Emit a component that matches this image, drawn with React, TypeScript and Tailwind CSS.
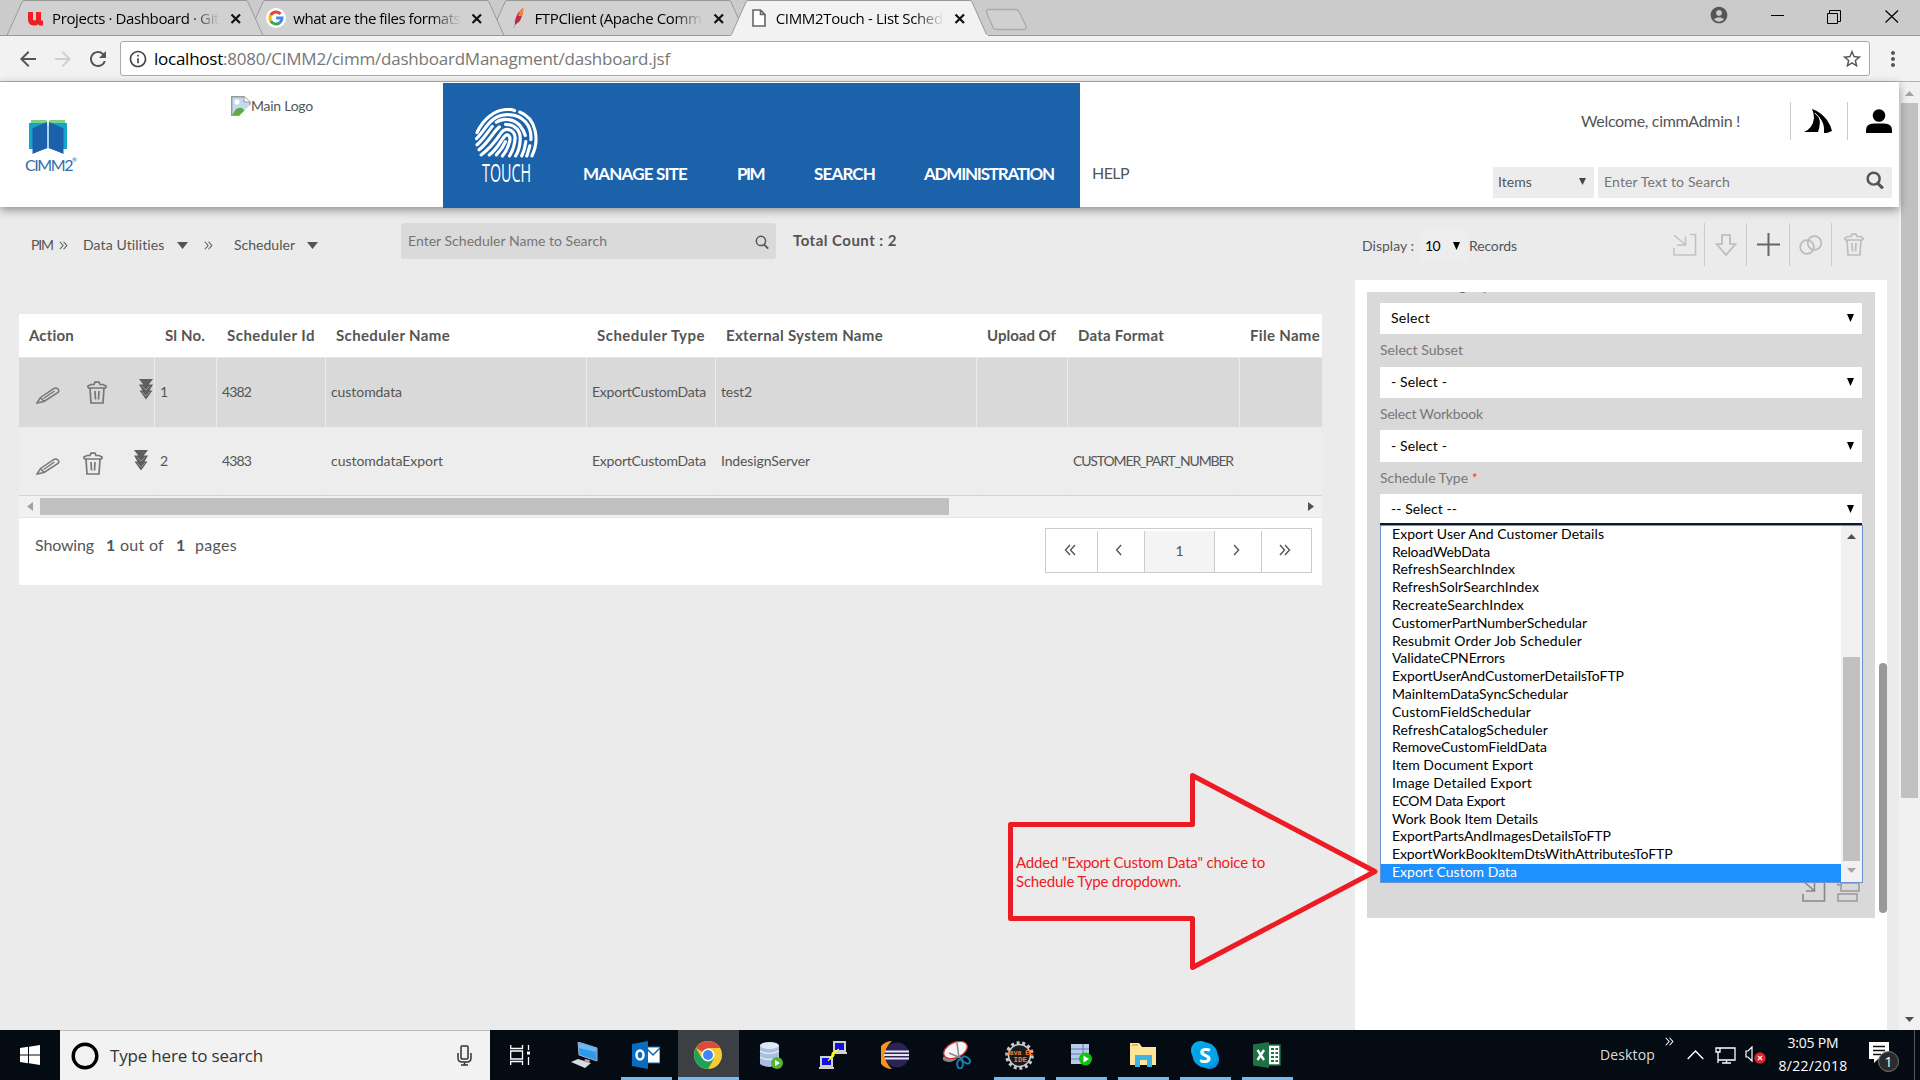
import React, { useLayoutEffect, useRef } from "react";
import { clsx } from "clsx";
import { MdArrowBack, MdArrowForward, MdRefresh, MdInfoOutline, MdStarBorder, MdAccountCircle, MdMoreVert } from "react-icons/md";

/* Single line of text whose tracking is adjusted to fill a known width. */
function T({ w, children, className }: { w: number; children: string; className?: string }) {
  const ref = useRef<HTMLSpanElement>(null);
  useLayoutEffect(() => {
    const el = ref.current;
    if (!el) return;
    el.style.letterSpacing = "0px";
    const natural = el.getBoundingClientRect().width;
    el.style.letterSpacing = `${(w - natural) / children.length}px`;
  }, [w, children]);
  return (
    <span className={clsx("block shrink-0 whitespace-pre", className)} style={{ width: w }}>
      <span ref={ref} className="inline-block">{children}</span>
    </span>
  );
}

const ui = "font-['Open_Sans',sans-serif]";

function Tab({ title, icon, active, z }: { title: string; icon: React.ReactNode; active?: boolean; z: string }) {
  return (
    <div className={clsx("relative flex h-9 w-[257px] shrink-0 items-center -mr-[15.75px] pl-[20px]", z)}>
      <svg className="absolute inset-0" width="257" height="36" viewBox="0 0 257 36">
        <path d="M0 35.5 L15 2 Q15.500 .5 17 .5 H239 Q240.500 .5 241 2 L256 35.500" fill={active ? "#f2f2f2" : "#d1d1d1"} stroke="#999" />
        {active ? <path d="M0 35.500H257" stroke="#f2f2f2" strokeWidth="1.500" /> : <path d="M0 35.500H257" stroke="#999" />}
      </svg>
      <div className="relative flex h-9 w-full items-center">
        <div className="flex w-[26px] items-center">{icon}</div>
        <div className="-ml-px w-[168px] overflow-hidden [mask-image:linear-gradient(to_right,black_82%,transparent_100%)]">
          <T w={167} className={clsx(ui, "text-[15px] leading-5 text-black")}>{title}</T>
        </div>
        <svg className="ml-[10px] mt-0.5" width="12" height="12" viewBox="0 0 12 12"><path d="M1.500 1.500L10 10M10 1.500L1.500 10" stroke="#111" strokeWidth="2.200" /></svg>
      </div>
    </div>
  );
}

const GoogleG = () => (
  <svg className="-ml-[2px]" width="20" height="20" viewBox="0 0 20 20"><circle cx="10" cy="10" r="10" fill="#fff" />
    <g fill="none" strokeWidth="3"><path d="M14.600 6A6 6 0 0 0 4.700 7.200" stroke="#ea4335" /><path d="M4.700 7.200A6 6 0 0 0 4.800 13" stroke="#fbbc05" /><path d="M4.800 13A6 6 0 0 0 13.700 14.700" stroke="#34a853" /><path d="M13.700 14.700A6 6 0 0 0 16 10H10.200" stroke="#4285f4" /></g>
  </svg>
);

const Down = ({ s = 8, h = 8, c = "#000" }: { s?: number; h?: number; c?: string }) => (
  <svg className="shrink-0" width={s} height={h} viewBox="0 0 8 8" preserveAspectRatio="none"><path d="M0 0H8L4 8Z" fill={c} /></svg>
);

const Search = ({ s, c = "#555", sw = 2.2 }: { s: number; c?: string; sw?: number }) => (
  <svg className="shrink-0" width={s} height={s} viewBox="0 0 16 16" fill="none" stroke={c} strokeWidth={sw}><circle cx="6.800" cy="6.800" r="5.300" /><path d="M10 10.500L15 15.500" strokeWidth={sw + 0.5} /></svg>
);

const Chevs = ({ n, left, h = 12, c = "#555" }: { n: number; left?: boolean; h?: number; c?: string }) => (
  <svg width={n === 2 ? h : h * 0.6} height={h} viewBox={n === 2 ? "0 0 12 12" : "0 0 7 12"} fill="none" stroke={c} strokeWidth="1.400" className={clsx("shrink-0", left && "rotate-180")}>
    <path d="M1 1L5.500 6L1 11" />{n === 2 && <path d="M6 1L10.500 6L6 11" />}
  </svg>
);

const Trash = ({ c }: { c: string }) => (
  <svg className="shrink-0" width="20" height="23" viewBox="0 0 20 23" fill="none" stroke={c} strokeWidth="1.700">
    <path d="M1 7V5L4 3.500H7L8 1.200H12L13 3.500H16L19 5V7M1 7H19M3 7L4 22H16L17 7M8 10L8.500 18.500M12 10L11.500 18.500" />
  </svg>
);
const Pencil = () => (
  <svg className="shrink-0" width="24" height="17" viewBox="0 0 24 17" fill="none" stroke="#777" strokeWidth="1.500">
    <path d="M1 16L4.500 10.500L18 1.500Q20 .5 22 2Q23.500 4 22 5.500L8 14.500ZM4.500 10.500L8 14.500M7.500 11.500L18.500 4" />
  </svg>
);
const Triple = () => (
  <svg className="shrink-0" width="14" height="21" viewBox="0 0 14 21" fill="#5f5f5f">
    <path d="M0 0H14L9.800 5.500H14L10.500 11.500H13.500L7 20.500L.5 11.500H3.500L0 5.500H4.200Z" />
    <path d="M3 7L7 11L11 7M3 13L7 17L11 13" fill="none" stroke="#aaa" strokeWidth=".7" />
  </svg>
);
const Enter = ({ c }: { c: string }) => (
  <svg className="shrink-0" width="24" height="23" viewBox="0 0 24 23" fill="none" stroke={c} strokeWidth="1.600"><path d="M17 1.500H22.500V22H1V15M1 2L12 11.500M12.500 3.500V12H4" /></svg>
);

const Fingerprint = () => (
  <svg className="block" width="63" height="50" viewBox="0 0 62 49" preserveAspectRatio="none" fill="none" stroke="#fff" strokeWidth="3.100" strokeLinecap="round">
    <path d="M2 24C8 11 19 2 31 1.500Q36 1 39 2.500M44 4C60 10 64 31 56 47" />
    <path d="M1.500 30C10 22 15 7 31 6.500C48 6 56 18 55 31M54 37L51 47" />
    <path d="M2 36C8 31 13 23 17 18M21 14C28 9 39 11 44 17Q48 22 49.500 27M50 33Q49 41 46 47" />
    <path d="M4 41C14 33 19 22 24 18.500M30 16C40 16 45 23 44.500 31Q44 41 40 47" />
    <path d="M6 46C17 38 22 30 26 24C31 18 39 22 39.500 29Q39 39 34 47" />
    <path d="M14 46C23 39 25 32 29 28C32 24 35.500 28 34 33Q32 41 27 47" />
    <path d="M21 46Q27 40 30 33" />
  </svg>
);

const CimmLogo = () => (
  <svg width="40" height="36" viewBox="0 0 40 36"><path d="M3 0H18L20 3L22 0H37V6H3Z" fill="#7fcf8b" /><path d="M1 3H17L20 6L23 3H39V29H33V32L20 28L7 32V29H1Z" fill="#12a5c9" /><path d="M4.500 9Q4.500 8 6 7.500L19 2V28L4.500 34ZM21 2L34 7.500Q35.500 8 35.500 9V34L21 28Z" fill="#1c5fab" /><path d="M20 1V28" stroke="#fff" strokeWidth="1.200" /></svg>
);

const headers: [string, number, string][] = [
  ["Action", 45, "w-[136px] pl-[10px]"], ["Sl No.", 40, "w-[62px] pl-[10px]"], ["Scheduler Id", 88, "w-[109px] pl-[10px]"],
  ["Scheduler Name", 114, "w-[261px] pl-[10px]"], ["Scheduler Type", 108, "w-[129px] pl-[10px]"], ["External System Name", 157, "w-[261px] pl-[10px]"],
  ["Upload Of", 69, "w-[91px] pl-[10px]"], ["Data Format", 86, "w-[172px] pl-[10px]"], ["File Name", 70, "w-[82px] pl-[10px]"],
];
const colW = ["w-[62px]", "w-[109px]", "w-[261px]", "w-[129px]", "w-[261px]", "w-[91px]", "w-[172px]", "w-[82px]"];
const rows: [string, number][][] = [
  [["1", 7], ["4382", 29], ["customdata", 71], ["ExportCustomData", 114], ["test2", 31], ["", 0], ["", 0], ["", 0]],
  [["2", 8], ["4383", 29], ["customdataExport", 112], ["ExportCustomData", 114], ["IndesignServer", 89], ["", 0], ["CUSTOMER_PART_NUMBER", 160], ["", 0]],
];

const options: [string, number][] = [
  ["Export User And Customer Details", 212], ["ReloadWebData", 98], ["RefreshSearchIndex", 123], ["RefreshSolrSearchIndex", 147],
  ["RecreateSearchIndex", 132], ["CustomerPartNumberSchedular", 195], ["Resubmit Order Job Scheduler", 190], ["ValidateCPNErrors", 113],
  ["ExportUserAndCustomerDetailsToFTP", 232], ["MainItemDataSyncSchedular", 176], ["CustomFieldSchedular", 139], ["RefreshCatalogScheduler", 156],
  ["RemoveCustomFieldData", 155], ["Item Document Export", 141], ["Image Detailed Export", 140], ["ECOM Data Export", 113],
  ["Work Book Item Details", 146], ["ExportPartsAndImagesDetailsToFTP", 219], ["ExportWorkBookItemDtsWithAttributesToFTP", 280], ["Export Custom Data", 125],
];

function Field({ text, w, cls }: { text: string; w: number; cls: string }) {
  return (
    <div className={clsx("flex w-[482px] items-center justify-between bg-white pl-[11px] pr-[8px] text-[14px] text-black", cls)}>
      <T w={w}>{text}</T><Down s={7} h={8} />
    </div>
  );
}

function Task({ children, open, active, cls }: { children: React.ReactNode; open?: boolean; active?: boolean; cls?: string }) {
  return (
    <div className={clsx("flex h-[50px] w-[62px] shrink-0 flex-col items-center", cls)}>
      <div className={clsx("flex h-[47px] items-center justify-center pt-[3px]", active ? "w-[61px] bg-[#3c4044]" : "w-[51px]")}>{children}</div>
      {open && <div className={clsx("h-[3px] bg-[#76b9ed]", active ? "w-[61px]" : "w-[51px]")} />}
    </div>
  );
}

export default function App() {
  return (
    <div className="relative flex h-[1080px] w-[1920px] flex-col overflow-hidden bg-[#ebebeb] font-['Lato',sans-serif] leading-none text-[#555]">
      {/* Tab strip */}
      <div className="flex h-9 shrink-0 border-b border-[#999] bg-[#cbcbcb] pl-[7px]">
        <Tab z="z-30" title="Projects · Dashboard · Git" icon={<svg width="17" height="15" viewBox="0 0 17 15"><path d="M3.500 1V8.500Q3.500 12 7.500 12Q11.500 12 11.500 8V1M12 12H16" fill="none" stroke="#f01d24" strokeWidth="5" /></svg>} />
        <Tab z="z-20" title="what are the files formats" icon={<GoogleG />} />
        <Tab z="z-10" title="FTPClient (Apache Comm" icon={<svg width="17" height="21" viewBox="0 0 17 21"><path d="M4 20L5 16" stroke="#aaa" /><path d="M13 0Q14 4 10 13L5 17Q4 12 8 5Z" fill="#c5294a" /><path d="M13 0Q14 3 11.500 8L8 8Q10 2 13 0Z" fill="#f08a2c" /></svg>} />
        <Tab z="z-40" active title="CIMM2Touch - List Sched" icon={<svg className="ml-[1px]" width="14" height="18" viewBox="0 0 14 18"><path d="M1 1H8.500L13 5.500V17H1ZM8.500 1V5.500H13" fill="#fff" stroke="#666" strokeWidth="1.600" /></svg>} />
        <svg className="ml-[13px] mt-[8px]" width="43" height="23" viewBox="0 0 43 23"><path d="M4 1.500H31Q33 1.500 34 3.500L41 18Q42 21.500 39 21.500H12Q9 21.500 8 19.500L1.500 4Q1 1.500 4 1.500Z" fill="#d0d0d0" stroke="#aaa" strokeWidth="1.300" /></svg>
        <div className="ml-auto flex items-start pr-[21px]">
          <MdAccountCircle className="mt-[5px] mr-[42px]" size={20} color="#555" />
          <div className="mr-[43px] mt-[15px] h-px w-[13px] bg-black" />
          <svg className="mr-[44px] mt-[10px]" width="14" height="14" viewBox="0 0 14 14" fill="none" stroke="#000"><path d="M.5 3.500H10.500V13.500H.5ZM2.500 3.500V.5H13.500V11.500H10.500" /></svg>
          <svg className="mt-[10px]" width="14" height="13" viewBox="0 0 14 13" stroke="#000" strokeWidth="1.200"><path d="M.5 .5L13 12.500M13 .5L.5 12.500" /></svg>
        </div>
      </div>
      {/* Toolbar */}
      <div className="flex h-[46px] shrink-0 items-center border-b border-[#b3b3b3] bg-[#f2f2f2]">
        <MdArrowBack className="ml-[16px]" size={24} color="#555" />
        <MdArrowForward className="ml-[11px]" size={24} color="#d0d0d0" />
        <MdRefresh className="ml-[11px]" size={24} color="#555" />
        <div className="ml-[10px] flex h-[35px] w-[1750px] items-center rounded-[3px] border border-[#aaa] bg-white pl-[7px] pr-[6px]">
          <MdInfoOutline size={20} color="#444" />
          <T w={69} className={clsx(ui, "ml-[6px] text-[17px] text-black")}>localhost</T>
          <T w={447} className={clsx(ui, "text-[17px] text-[#777]")}>:8080/CIMM2/cimm/dashboardManagment/dashboard.jsf</T>
          <MdStarBorder className="ml-auto" size={22} color="#555" />
        </div>
        <MdMoreVert className="ml-[11px]" size={24} color="#555" />
      </div>

      {/* Page */}
      <div className="flex h-[948px] shrink-0">
        <div className="flex w-[1899px] flex-col">
          <div className="relative z-10 flex h-[125px] shrink-0 bg-white shadow-[0_3px_9px_rgba(0,0,0,0.4)]">
            <div className="flex w-[231px] flex-col pl-[25px] pt-[38px]">
              <div className="ml-[3px]"><CimmLogo /></div>
              <div className="mt-px flex">
                <T w={47} className="text-[16px] text-[#2d6bb0]">CIMM2</T>
                <span className="text-[6px] text-[#2d6bb0]">®</span>
              </div>
            </div>
            <div className="flex w-[212px] pt-[14px]">
              <svg width="20" height="20" viewBox="0 0 20 20"><path d="M.7 .7H13L19 6V19.300H.7Z" fill="#c5d9f2" stroke="#999" strokeWidth="1.400" /><path d="M13 .7V6H19" fill="#fff" stroke="#999" /><circle cx="6" cy="6" r="2.500" fill="#fff" /><path d="M1.500 19Q5 10 11 12L15 16L12 19Z" fill="#5bae3e" /><path d="M8 20L20 8V20Z" fill="#fff" /></svg>
              <T w={62} className="pt-[3px] text-[14px]">Main Logo</T>
            </div>
            <div className="mt-px flex h-[125px] w-[637px] bg-[#1b62ab] text-white">
              <div className="ml-[32px] w-[63px] pt-[25px]">
                <Fingerprint />
                <svg className="ml-[6px] mt-px block overflow-visible" width="52" height="26" viewBox="0 0 52 26"><text x="1" y="22.500" fontFamily="Open Sans" fontSize="25" textLength="49" lengthAdjust="spacingAndGlyphs" fill="#fff">TOUCH</text></svg>
              </div>
              <div className="flex items-start pt-[82px] text-[17px] font-bold">
                <T w={104} className="ml-[45px]">MANAGE SITE</T><T w={27} className="ml-[50px]">PIM</T><T w={61} className="ml-[50px]">SEARCH</T><T w={130} className="ml-[49px]">ADMINISTRATION</T>
              </div>
            </div>
            <T w={37} className="ml-[12px] pt-[83px] text-[16px]">HELP</T>
            <div className="ml-auto flex w-[400px] flex-col items-end pr-[7px]">
              <div className="mt-[20px] flex h-[38px] items-center">
                <T w={159} className="mr-[50px] text-[16px]">Welcome, cimmAdmin !</T>
                <div className="flex h-[38px] w-[58px] items-center justify-center border-x border-[#ccc]">
                  <svg className="-ml-[2px]" width="28" height="24" viewBox="0 0 28 24"><path d="M0 23Q9 19 10 9Q10 4 8 0Q17 3 23 11Q27 17 28 22L23 24H20Q21 14 15 8Q17 15 14 23Z" fill="#000" /><path d="M11 4Q20 12 18 23" stroke="#fff" fill="none" /></svg>
                </div>
                <svg className="ml-[18px]" width="26" height="24" viewBox="0 0 26 24"><circle cx="13" cy="6.500" r="6.300" /><path d="M0 24V21Q0 14.500 8 14.500H18Q26 14.500 26 21V24Z" /></svg>
              </div>
              <div className="mt-[27px] flex h-[31px]">
                <div className="flex w-[101px] items-center bg-[#ececec] pb-[2px] pl-[5px] text-[14px]"><T w={34}>Items</T><span className="ml-[47px]"><Down s={7} h={7} c="#444" /></span></div>
                <div className="ml-[4px] flex w-[294px] items-center rounded-[2px] bg-[#ececec] pb-[2px] pl-[6px] pr-[8px] text-[14px] text-[#757575]"><T w={126}>Enter Text to Search</T><span className="ml-auto pb-[3px]"><Search s={18} /></span></div>
              </div>
            </div>
          </div>

          <div className="flex flex-1">
            <div className="w-[1355px]">
              {/* Breadcrumb */}
              <div className="flex h-[107px] items-start pl-[31px] pt-[16px] text-[14px]">
                <div className="mt-[5px] flex h-[34px] items-center">
                  <T w={22}>PIM</T><span className="ml-[6px]"><Chevs n={2} h={9} /></span>
                  <T w={82} className="ml-[15px]">Data Utilities</T><span className="ml-[12px]"><Down s={11} h={7} c="#555" /></span>
                  <span className="ml-[16px]"><Chevs n={2} h={9} /></span>
                  <T w={61} className="ml-[21px]">Scheduler</T><span className="ml-[12px]"><Down s={11} h={7} c="#555" /></span>
                </div>
                <div className="ml-[83px] flex h-[36px] w-[375px] items-center rounded-[3px] bg-[#dadada] pl-[7px] pr-[7px] text-[#757575]"><T w={199}>Enter Scheduler Name to Search</T><span className="ml-auto pt-px"><Search s={14} sw={1.7} /></span></div>
                <T w={104} className="ml-[17px] mt-[10px] text-[15px] font-bold">Total Count : 2</T>
              </div>
              {/* Table */}
              <div className="ml-[19px] w-[1303px] bg-white">
                <div className="flex h-[43px] items-center text-[15px] font-bold">
                  {headers.map(([h, w, c]) => <div key={h} className={clsx("shrink-0", c)}><T w={w}>{h}</T></div>)}
                </div>
                {rows.map((r, i) => (
                  <div key={i} className={clsx("flex overflow-hidden text-[14px]", i ? "h-[69px] border-b border-[#d4d4d4] bg-[#ededed]" : "h-[70px] border-t border-[#e6e6e6] bg-[#d9d9d9]")}>
                    <div className={clsx("flex w-[135px] shrink-0 items-start pl-[17px]", i ? "pt-[25px]" : "pt-[23px]")}>
                      <span className="mt-[6px]"><Pencil /></span>
                      <span className={i ? "ml-[23px]" : "ml-[27px]"}><Trash c="#777" /></span>
                      <span className={clsx("-mt-[2px]", i ? "ml-[31px]" : "ml-[32px]")}><Triple /></span>
                    </div>
                    {r.map(([t, w], j) => (
                      <div key={j} className={clsx("flex shrink-0 items-center border-l border-[#ececec] pl-[5px]", colW[j], !i && "pb-[2px]")}>{t && <T w={w}>{t}</T>}</div>
                    ))}
                  </div>
                ))}
                <div className="flex h-[22px] items-center border-b border-[#e5e5e5] bg-[#f1f1f1] pl-[8px] pr-[8px]">
                  <svg width="6" height="9" viewBox="0 0 6 9"><path d="M6 0V9L0 4.500Z" fill="#a3a3a3" /></svg>
                  <div className="ml-[7px] h-[17px] w-[909px] bg-[#c1c1c1]" />
                  <svg className="ml-auto" width="6" height="9" viewBox="0 0 6 9"><path d="M0 0V9L6 4.500Z" fill="#505050" /></svg>
                </div>
                <div className="flex h-[67px] items-start pl-[16px] pt-[10px]">
                  <div className="mt-[9px] flex text-[16px]">
                    <T w={59}>Showing</T><T w={8} className="ml-[12px] font-bold">1</T><T w={44} className="ml-[6px]">out of</T><T w={8} className="ml-[12px] font-bold">1</T><T w={42} className="ml-[11px]">pages</T>
                  </div>
                  <div className="ml-auto mr-[10px] flex h-[45px] w-[267px] items-center border border-[#ccc] pt-[2px]">
                    <div className="flex h-full w-[51px] items-center justify-center pr-[3px] pb-[4px]"><Chevs n={2} left /></div>
                    <div className="flex h-full w-[47px] items-center justify-center border-l border-[#ccc] pr-[4px] pb-[4px]"><Chevs n={1} left /></div>
                    <div className="flex h-full w-[71px] items-center justify-center border-x border-[#ccc] bg-[#f4f4f4] pb-[2px] text-[14px]">1</div>
                    <div className="flex h-full w-[46px] items-center justify-center pr-[3px] pb-[4px]"><Chevs n={1} /></div>
                    <div className="flex h-full w-[50px] items-center justify-center border-l border-[#ccc] pr-[4px] pb-[4px]"><Chevs n={2} /></div>
                  </div>
                </div>
              </div>
            </div>

            {/* Detail panel */}
            <div className="w-[532px]">
              <div className="flex h-[73px] items-start pl-[7px] pt-[16px] text-[14px]">
                <T w={52} className="mt-[16px]">Display :</T>
                <div className="ml-[6px] mt-[7px] flex h-[31px] w-[48px] items-center bg-[#ededed] pl-[5px] text-black"><T w={15}>10</T><span className="ml-[13px]"><Down s={7} h={8} /></span></div>
                <T w={48} className="ml-[1px] mt-[16px]">Records</T>
                <div className="ml-auto flex h-[43px] items-center pr-[25px]">
                  <div className="flex h-full w-[31px] items-center"><Enter c="#c2c2c2" /></div>
                  <div className="flex h-full w-[42px] items-center justify-center border-l border-[#ccc]"><svg width="22" height="22" viewBox="0 0 22 22"><path d="M7 1H15V10H20.500L11 21L1.500 10H7Z" fill="none" stroke="#bbb" strokeWidth="1.700" /></svg></div>
                  <div className="flex h-full w-[43px] items-center justify-center border-l border-[#ccc]"><svg width="23" height="23" viewBox="0 0 23 23"><path d="M11.500 0V23M0 11.500H23" stroke="#666" strokeWidth="2" /></svg></div>
                  <div className="flex h-full w-[42px] items-center justify-center border-l border-[#ccc]"><svg width="24" height="20" viewBox="0 0 24 20" fill="none" stroke="#bbb" strokeWidth="1.700"><circle cx="8" cy="12" r="6.800" /><circle cx="15.500" cy="8" r="6.800" /></svg></div>
                  <div className="flex h-full w-[31px] items-center border-l border-[#ccc] pl-[12px]"><Trash c="#bdbdbd" /></div>
                </div>
              </div>
              <div className="flex h-[750px] bg-white pl-[12px] pt-[12px]">
                <div className="relative h-[626px] w-[508px] bg-[#d9d9d9] pl-[13px] text-[14px]">
                  <div className="h-[11px] overflow-hidden"><T w={110} className="-mt-[13px] text-[#666]">Select Category</T></div>
                  <Field text="Select" w={39} cls="h-[31px] pb-[2px]" />
                  <div className="flex h-[33px] items-center pb-[2px] text-[#777]"><T w={83}>Select Subset</T></div>
                  <Field text="- Select -" w={56} cls="h-[31px] pb-[2px]" />
                  <div className="flex h-[32px] items-center text-[#777]"><T w={103}>Select Workbook</T></div>
                  <Field text="- Select -" w={56} cls="h-[32px]" />
                  <div className="flex h-[32px] items-center text-[#777]"><T w={88}>Schedule Type</T><span className="ml-[4px] text-[13px] text-red-500">*</span></div>
                  <Field text="-- Select --" w={66} cls="h-[31px] border-b-2 border-[#0a1a30] pt-px" />
                  {/* Open dropdown list */}
                  <div className="absolute left-[13px] top-[233px] z-20 flex h-[358px] w-[483px] border border-[#6c93cf] bg-white">
                    <div className="flex w-[460px] flex-col text-black">
                      {options.map(([o, w], i) => (
                        <div key={o} className={clsx("flex h-[17.8px] shrink-0 items-center pb-[2px] pl-[11px]", i === 19 && "bg-[#1e90ff] text-white")}><T w={w}>{o}</T></div>
                      ))}
                    </div>
                    <div className="flex w-[21px] flex-col items-center bg-[#f1f1f1] pt-[8px]">
                      <span className="rotate-180"><Down s={9} h={5} c="#505050" /></span>
                      <div className="mt-[118px] h-[204px] w-[17px] bg-[#c1c1c1]" />
                      <span className="mt-[7px]"><Down s={9} h={5} c="#a3a3a3" /></span>
                    </div>
                  </div>
                  <div className="mt-[354px] flex pl-[422px]">
                    <Enter c="#888" />
                    <svg className="ml-[11px]" width="24" height="23" viewBox="0 0 24 23" fill="none" stroke="#999" strokeWidth="1.500"><path d="M1 1V6H5M4 4H22V12H4ZM1 15H20V22H1Z" /></svg>
                  </div>
                </div>
                <div className="ml-[4px] mt-[371px] h-[250px] w-[8px] rounded-full bg-[#999]" />
              </div>
            </div>
          </div>
        </div>
        {/* Page scrollbar */}
        <div className="flex w-[21px] flex-col items-center bg-[#f1f1f1] pt-[9px]">
          <span className="rotate-180"><Down s={9} h={5} c="#a3a3a3" /></span>
          <div className="mt-[7px] h-[695px] w-[17px] bg-[#c1c1c1]" />
          <span className="mb-[8px] mt-auto"><Down s={9} h={5} c="#505050" /></span>
        </div>
      </div>

      {/* Annotation */}
      <div className="absolute left-[1006px] top-[772px] z-30 h-[200px] w-[374px]">
        <svg className="absolute inset-0" width="374" height="200" viewBox="0 0 374 200"><path d="M4.500 52.500H186.500V3.500L369 99.500L186.500 195.500V146.500H4.500Z" fill="none" stroke="#ed1c24" strokeWidth="5" strokeLinejoin="round" /></svg>
        <div className="relative pl-[10px] pt-[81px] text-[15px] leading-[19px] text-[#ed1c24]"><T w={249}>Added "Export Custom Data" choice to</T><T w={165}>Schedule Type dropdown.</T></div>
      </div>

      {/* Taskbar */}
      <div className={clsx("flex h-[50px] shrink-0 bg-[#050b13] text-white", ui)}>
        <div className="flex w-[60px] items-center pl-[20px]"><svg width="20" height="20" viewBox="0 0 20 20" fill="#fff"><path d="M0 3L8 1.800V9.500H0ZM9 1.700L20 0V9.500H9ZM0 10.500H8V18.200L0 17ZM9 10.500H20V20L9 18.300Z" /></svg></div>
        <div className="flex w-[430px] items-center border-t border-[#bbb] bg-[#f2f2f2] pl-[11px]">
          <svg width="28" height="28" viewBox="0 0 28 28"><circle cx="14" cy="14" r="11.800" fill="none" stroke="#000" strokeWidth="3.400" /></svg>
          <T w={153} className="ml-[11px] text-[17px] text-[#333]">Type here to search</T>
          <svg className="ml-[194px]" width="15" height="21" viewBox="0 0 15 21" fill="none" stroke="#333" strokeWidth="1.500"><rect x="4" y="1" width="7" height="13" rx="1" /><path d="M1 8V13Q1 17 5 17H10Q14 17 14 13V8M7.500 17V20M4 20H11" /></svg>
        </div>
        <Task cls="-ml-px"><svg width="20" height="20" viewBox="0 0 20 20" fill="none" stroke="#fff" strokeWidth="1.300"><path d="M.7 0V3.500H12.500V0M.7 20V16.500H12.500V20M.7 6H12.500V14H.7ZM18.500 0V5M18.500 12V20" /><path d="M18.500 6.500V9.500" strokeWidth="3" /></svg></Task>
        <Task cls="ml-[2px]"><svg width="28" height="27" viewBox="0 0 28 27"><path d="M8 0L27 6V19L9 13Z" fill="#2e9bea" stroke="#aac" /><path d="M9 1L26 6V10L9 6Z" fill="#63bcf5" /><path d="M1 20L8 17L21 21L15 26Z" fill="#d9dde2" /><path d="M15 17L20 18L19 21L14 20Z" fill="#aaa" /></svg></Task>
        <Task open><svg width="28" height="28" viewBox="0 0 28 28"><path d="M14 6H28V22H14Z" fill="#fff" stroke="#0a6cc1" /><path d="M14 7L21 14L28 7" fill="none" stroke="#0a6cc1" strokeWidth="1.500" /><path d="M0 3L16 0V28L0 25Z" fill="#0a6cc1" /><ellipse cx="8" cy="14" rx="3.500" ry="4.500" fill="none" stroke="#fff" strokeWidth="2.500" /></svg></Task>
        <Task open active><svg width="28" height="28" viewBox="0 0 28 28"><circle cx="14" cy="14" r="14" fill="#fbc934" /><path d="M14 14L1.900 7A14 14 0 0 1 26.100 7H14Z" fill="#dd4b3e" /><path d="M1.900 7A14 14 0 0 0 14 28L20 17.500L14 14L8 17.500Z" fill="#1fa15d" /><circle cx="14" cy="14" r="6.500" fill="#fff" /><circle cx="14" cy="14" r="5" fill="#4285f4" /></svg></Task>
        <Task cls="ml-px"><svg width="24" height="28" viewBox="0 0 24 28"><path d="M1 4V23Q10 29 20 23V4Z" fill="#a9bfdf" /><ellipse cx="10.500" cy="4.500" rx="9.500" ry="3.500" fill="#dfe8f5" /><path d="M1 10Q10 15 20 10M1 16Q10 21 20 16" fill="none" stroke="#eef" strokeWidth="1.200" /><circle cx="18" cy="22" r="6" fill="#54b332" /><path d="M16 19L21 22L16 25Z" fill="#fff" /></svg></Task>
        <Task><svg width="28" height="28" viewBox="0 0 28 28"><g fill="#d0d0d0"><path d="M14 0H27V11H28V13H14ZM1 15H14V26H15V28H0V26H1Z" /></g><path d="M16 2H25V9H16ZM3 17H12V24H3Z" fill="#1111dd" /><path d="M20 8L13 12V14L9 20L15 15V13Z" fill="#ff0" stroke="#ff0" /></svg></Task>
        <Task><svg width="28" height="28" viewBox="0 0 28 28"><path d="M11 0A14 14 0 0 0 11 28A18 18 0 0 1 11 0" fill="#f7941e" /><circle cx="16" cy="14" r="12.500" fill="#2c2255" /><path d="M4 10.500H28M3 14H28.500M4 17.500H28" stroke="#e5e5f5" strokeWidth="2" /></svg></Task>
        <Task><svg width="28" height="28" viewBox="0 0 28 28"><path d="M0 16V19Q7 24 15 17L24 8V5Z" fill="#888" /><ellipse cx="12.500" cy="9" rx="12.500" ry="7.500" transform="rotate(-25 12.500 9)" fill="#f5f5f5" stroke="#c33" strokeWidth="1.300" /><path d="M14 2L16 17M6 12L18 17" stroke="#888" strokeWidth="1.500" /><g fill="none" stroke="#1c7db5" strokeWidth="2"><ellipse cx="17" cy="23" rx="2.800" ry="4.500" /><ellipse cx="23" cy="19" rx="4.500" ry="2.800" transform="rotate(35 23 19)" /></g></svg></Task>
        <Task open><svg width="29" height="29" viewBox="0 0 29 29"><circle cx="14.500" cy="14.500" r="12.800" fill="none" stroke="#ccc" strokeWidth="3" strokeDasharray="3 2.700" /><circle cx="14.500" cy="14.500" r="11" fill="#181a22" stroke="#ccc" strokeWidth="1.500" /><text x="1" y="13.500" fontSize="7.500" fontFamily="Liberation Mono" fontWeight="bold" fill="#f08030" textLength="27" lengthAdjust="spacingAndGlyphs">Java EE</text><text x="8.500" y="20.500" fontSize="7.500" fontFamily="Liberation Mono" fontWeight="bold" fill="#f08030">IDE</text></svg></Task>
        <Task open><svg width="22" height="22" viewBox="0 0 22 22"><path d="M1 0H19V20H1Z" fill="#b9cbe8" /><path d="M1 5H19M1 10H19M1 15H19M13 0V20" stroke="#5f7fb0" strokeWidth="1" /><circle cx="15.500" cy="15" r="6.500" fill="#12c40f" /><path d="M13.500 11.500L19 15L13.500 18.500Z" fill="#fff" /></svg></Task>
        <Task open><svg width="28" height="24" viewBox="0 0 28 24"><path d="M1 0H10L13 4H27V22H1Z" fill="#ffe597" /><path d="M3 1H9V3H3Z" fill="#f0b93a" /><path d="M6 12H23V24H18V17H11V24H6Z" fill="#3cb4e6" /></svg></Task>
        <Task open><svg className="overflow-visible" width="28" height="28" viewBox="0 0 28 28"><rect x="0" y="0" width="19" height="19" rx="9" fill="#00aff0" /><rect x="9" y="9" width="19" height="19" rx="9" fill="#0a8fe0" /><circle cx="14" cy="14" r="12.500" fill="#03a3ea" /><text x="14" y="22" textAnchor="middle" fontFamily="Open Sans" fontWeight="bold" fontSize="22" fill="#fff">S</text></svg></Task>
        <Task open><svg width="28" height="26" viewBox="0 0 28 26"><path d="M14 3H27V23H14Z" fill="#fff" stroke="#1e7145" strokeWidth="1.500" /><path d="M18 7H21M18 11H21M18 15H21M18 19H21M22.500 7H25M22.500 11H25M22.500 15H25M22.500 19H25" stroke="#1e7145" strokeWidth="2" /><path d="M0 2.500L16 0V26L0 23.500Z" fill="#1e7145" /><path d="M4.500 8L11 18M11 8L4.500 18" stroke="#fff" strokeWidth="2.300" /></svg></Task>
        <div className="ml-auto flex items-center">
          <T w={55} className="text-[14px] text-[#ddd]">Desktop</T>
          <span className="mb-[27px] ml-[10px]"><Chevs n={2} h={9} c="#fff" /></span>
          <svg className="ml-[13px]" width="17" height="10" viewBox="0 0 17 10" fill="none" stroke="#fff" strokeWidth="1.400"><path d="M.7 9L8.500 1L16.300 9" /></svg>
          <svg className="ml-[11px]" width="21" height="17" viewBox="0 0 21 17" fill="none" stroke="#fff" strokeWidth="1.300"><path d="M5 1H20V13H3V6M1 1H5V5H1ZM3 5V16M11.500 13V16M7 16H16" /></svg>
          <svg className="ml-[9px]" width="21" height="18" viewBox="0 0 21 18"><path d="M1 5H3L7 1V15L3 11H1Z" fill="none" stroke="#fff" strokeWidth="1.200" /><circle cx="15" cy="12" r="5.700" fill="#e0232e" /><path d="M13 10L17 14M17 10L13 14" stroke="#fff" strokeWidth="1.300" /></svg>
          <div className="ml-[12px] flex w-[70px] flex-col items-center gap-[9px] pb-px text-[14px]"><T w={51}>3:05 PM</T><T w={69}>8/22/2018</T></div>
          <div className="relative ml-[21px] mt-[4px] h-[30px] w-[31px]">
            <svg width="21" height="21" viewBox="0 0 21 21"><path d="M0 0H20V17H9L5 21V17H0Z" fill="#fff" /><path d="M4 4.500H16M4 8.500H16M4 12.500H12" stroke="#111" strokeWidth="1.300" /></svg>
            <div className="absolute left-[9px] top-[9px] flex h-[21px] w-[21px] items-center justify-center rounded-full border border-[#777] bg-[#2b2b2b] text-[14px]">1</div>
          </div>
          <div className="ml-[14px] mr-[5px] h-[50px] w-px bg-[#555]" />
        </div>
      </div>
    </div>
  );
}
